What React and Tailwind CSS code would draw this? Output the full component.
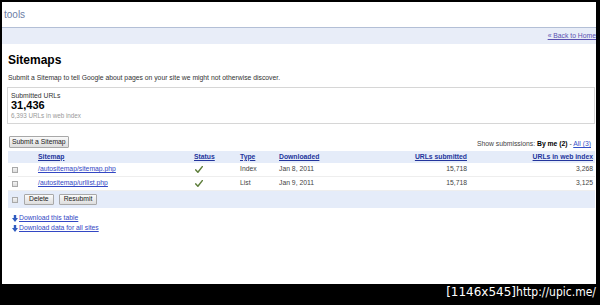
import React from "react";

const rows = [
  { path: "/autositemap/sitemap.php", type: "Index", date: "Jan 8, 2011", submitted: "15,718", indexed: "3,268" },
  { path: "/autositemap/urllist.php", type: "List", date: "Jan 9, 2011", submitted: "15,718", indexed: "3,125" },
];

const cols = "grid grid-cols-[27px_156px_46px_39px_124px_70px_125px] items-center";

function Check() {
  return (
    <svg width="8" height="7" viewBox="0 0 8 7" className="ml-[1px]">
      <path d="M0.8 3.9 L2.9 6.2 L7.3 0.6" fill="none" stroke="#5f7f3c" strokeWidth="1.5" strokeLinecap="round" strokeLinejoin="round" />
    </svg>
  );
}

function Box() {
  return <div className="w-[6px] h-[6px] border border-[#a9a9a9] bg-gradient-to-b from-[#f4f4f4] to-[#dcdcdc]" />;
}

function DownArrow() {
  return (
    <svg width="6" height="7" viewBox="0 0 6 7" className="mr-[1px]">
      <path d="M1.8 0 H4.2 V3 H6 L3 7 L0 3 H1.8 Z" fill="#2f5bc0" />
    </svg>
  );
}

function Btn({ children, className = "" }) {
  return (
    <div className={"h-[11px] flex items-center border border-[#a8a8a8] rounded-[1px] bg-gradient-to-b from-[#fafafa] to-[#dedede] text-[6.8px] text-[#222] " + className}>
      {children}
    </div>
  );
}

export default function App() {
  return (
    <div className="w-[600px] h-[305px] bg-black flex flex-col font-['Liberation_Sans',Arial,sans-serif]">
      <div className="ml-[2px] mt-[2px] w-[594px] h-[282px] bg-white flex flex-col">
        <div className="h-[26px] border-b border-[#b3bfd6] pl-[2px] pt-[5px] text-[10px] text-[#6d7ea6]">tools</div>
        <div className="h-[16px] bg-[#e8edf8] flex items-center justify-end pt-[1px]">
          <a className="text-[6.8px] text-[#5a4fb0] underline whitespace-nowrap">« Back to Home</a>
        </div>

        <div className="pl-[5px] pr-[1px] flex flex-col">
          <h1 className="mt-[9px] pl-[1px] text-[12px] leading-[14px] font-bold text-black">Sitemaps</h1>
          <p className="mt-[7px] pl-[1px] text-[6.8px] leading-[8px] text-[#333]">
            Submit a Sitemap to tell Google about pages on your site we might not otherwise discover.
          </p>

          <div className="mt-[5px] h-[37px] border border-[#d6d6d6] pl-[3px] pt-[4px] flex flex-col">
            <div className="text-[6.8px] leading-[8px] text-[#333]">Submitted URLs</div>
            <div className="text-[11px] leading-[11px] font-bold text-black">31,436</div>
            <div className="text-[6.3px] leading-[8px] text-[#999] mt-[1px]">6,393 URLs in web index</div>
          </div>

          <div className="mt-[12px] flex items-end justify-between">
            <Btn className="ml-[2px] px-[2px] h-[12px]">Submit a Sitemap</Btn>
            <div className="text-[6.8px] leading-[8px] text-[#444] pr-[4px] whitespace-nowrap">
              Show submissions: <b className="text-black">By me (2)</b> - <a className="text-[#3350c8] underline">All (3)</a>
            </div>
          </div>

          <div className="mt-[3px] pl-[1px]">
            <div className={cols + " h-[12px] bg-[#e5ecf9] text-[6.8px] font-bold text-[#23359c]"}>
              <div />
              <div className="pl-[3px] underline">Sitemap</div>
              <div className="pl-[3px] underline">Status</div>
              <div className="pl-[3px] underline">Type</div>
              <div className="pl-[3px] underline">Downloaded</div>
              <div className="text-right pr-[3px] underline">URLs submitted</div>
              <div className="text-right pr-[2px] underline">URLs in web index</div>
            </div>
            {rows.map((r) => (
              <div key={r.path} className={cols + " h-[14px] border-b border-[#eeeeee] text-[6.8px] text-[#444]"}>
                <div className="pl-[4px]"><Box /></div>
                <div className="pl-[3px] text-[#3347c4] underline">{r.path}</div>
                <div className="pl-[3px]"><Check /></div>
                <div className="pl-[3px]">{r.type}</div>
                <div className="pl-[3px]">{r.date}</div>
                <div className="text-right pr-[3px]">{r.submitted}</div>
                <div className="text-right pr-[2px]">{r.indexed}</div>
              </div>
            ))}
            <div className="h-[17px] bg-[#e5ecf9] flex items-center pl-[4px] gap-[6px]">
              <Box />
              <Btn className="px-[4px]">Delete</Btn>
              <Btn className="px-[4px] -ml-[1px]">Resubmit</Btn>
            </div>
          </div>

          <div className="mt-[6px] pl-[5px] flex flex-col gap-[2px] text-[6.8px] leading-[8px]">
            <div className="flex items-center"><DownArrow /><a className="text-[#3347c4] underline">Download this table</a></div>
            <div className="flex items-center"><DownArrow /><a className="text-[#3347c4] underline">Download data for all sites</a></div>
          </div>
        </div>
      </div>
      <div className="flex-1 flex justify-end items-start pr-[4px] pt-[1px] text-white text-[12px] leading-[14px] whitespace-nowrap">
        <span className="font-['DejaVu_Sans',sans-serif]">[1146x545]</span>
        <span className="font-['DejaVu_Sans_Condensed','DejaVu_Sans',sans-serif]">http://upic.me/</span>
      </div>
    </div>
  );
}
